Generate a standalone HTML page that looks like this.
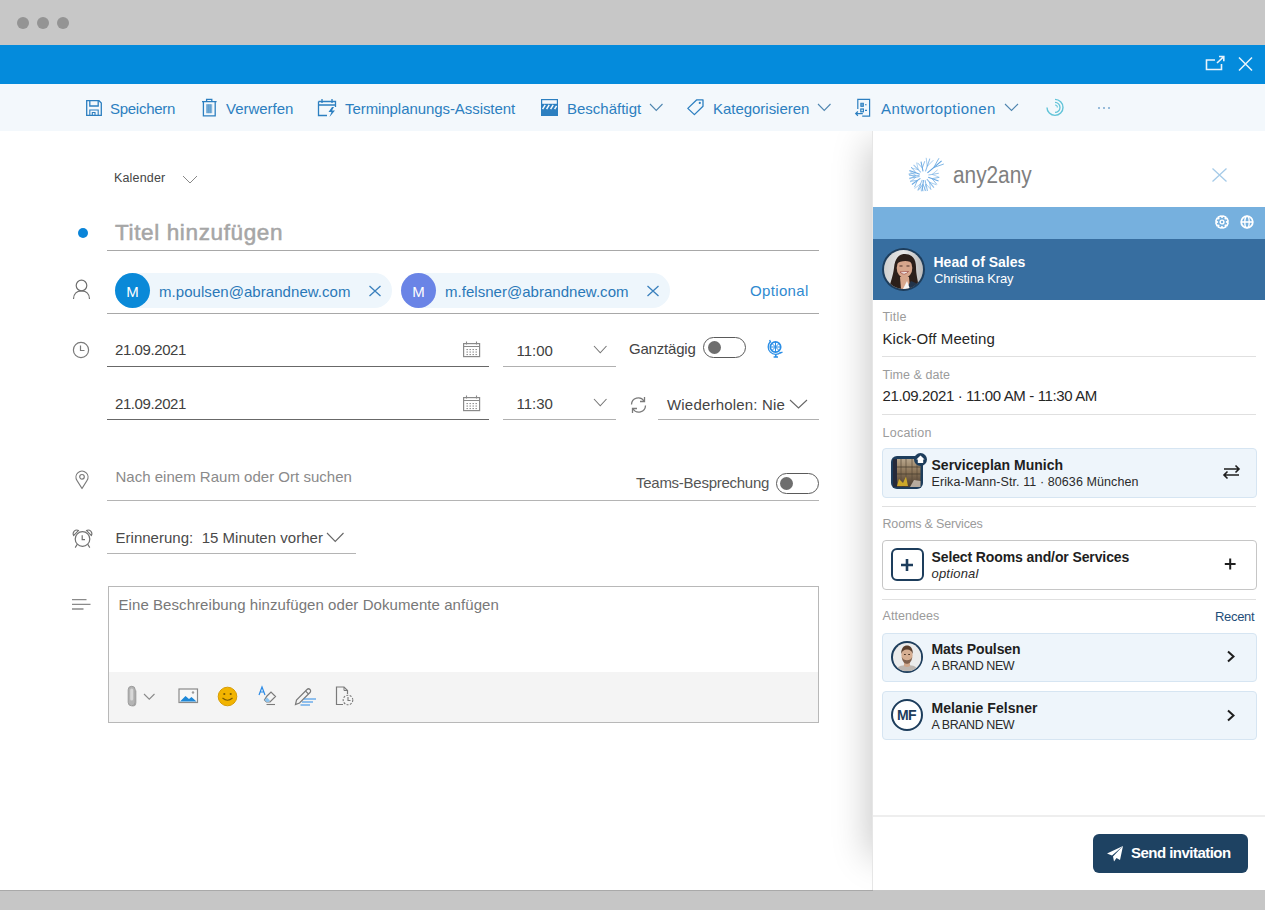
<!DOCTYPE html>
<html><head><meta charset="utf-8"><style>
html,body{margin:0;padding:0;width:1265px;height:910px;overflow:hidden;background:#fff;}
body{position:relative;font-family:"Liberation Sans",sans-serif;}
.a{position:absolute;}
.t{position:absolute;white-space:nowrap;}
svg.a{overflow:visible;}
</style></head><body>
<div class="a" style="left:0px;top:0px;width:1265px;height:45px;background:#c7c7c7;"></div>
<div class="a" style="left:16.5px;top:16.5px;width:12px;height:12px;background:#949494;border-radius:50%;"></div>
<div class="a" style="left:36.5px;top:16.5px;width:12px;height:12px;background:#949494;border-radius:50%;"></div>
<div class="a" style="left:56.5px;top:16.5px;width:12px;height:12px;background:#949494;border-radius:50%;"></div>
<div class="a" style="left:0px;top:45px;width:1265px;height:39px;background:#048bdc;"></div>
<svg class="a" style="left:1204px;top:55px;" width="22" height="17" viewBox="0 0 22 17" ><path d="M11 5 H2.5 V14.5 H17.5 V9" fill="none" stroke="#e8f3fb" stroke-width="1.6"/><path d="M13 8 L19.5 1.8 M15 1.5 H19.8 V6.3" fill="none" stroke="#e8f3fb" stroke-width="1.6"/></svg>
<svg class="a" style="left:1237px;top:56px;" width="17" height="16" viewBox="0 0 17 16" ><path d="M2 1.5 L15 14.5 M15 1.5 L2 14.5" fill="none" stroke="#eaf4fb" stroke-width="1.5"/></svg>
<div class="a" style="left:0px;top:84px;width:1265px;height:47px;background:#f3f8fc;"></div>
<svg class="a" style="left:85.5px;top:99.5px;" width="16" height="16" viewBox="0 0 16 16" ><path d="M0.7 0.7 H13 L15.3 3 V15.3 H0.7 Z" fill="none" stroke="#2c7fc0" stroke-width="1.3"/><path d="M3.8 0.7 V6 H12.2 V0.7" fill="none" stroke="#2c7fc0" stroke-width="1.3"/><path d="M3.8 15.3 V10 H12.2 V15.3 M6.3 15.3 V12.5 H9 V15.3" fill="none" stroke="#2c7fc0" stroke-width="1.1"/></svg>
<div id="t0" class="t" style="left:110.0px;top:101.00px;font-size:15px;line-height:15px;color:#2c7fc0;font-weight:400;font-style:normal;letter-spacing:-0.275px;">Speichern</div>
<svg class="a" style="left:201px;top:98px;" width="17" height="19" viewBox="0 0 17 19" ><path d="M1 3.6 H15.6 M5.6 3.4 V1.4 H10.8 V3.4 M2.4 3.6 V17.8 H14.2 V3.6" fill="none" stroke="#2c7fc0" stroke-width="1.3"/><rect x="5" y="6.2" width="6.2" height="9" fill="#2c7fc0" fill-opacity="0.55"/><path d="M7.1 6.2 V15.2 M9.1 6.2 V15.2" stroke="#2c7fc0" stroke-width="0.8" stroke-opacity="0.8"/></svg>
<div id="t1" class="t" style="left:226.0px;top:101.00px;font-size:15px;line-height:15px;color:#2c7fc0;font-weight:400;font-style:normal;letter-spacing:-0.024px;">Verwerfen</div>
<svg class="a" style="left:317px;top:98px;" width="21" height="20" viewBox="0 0 21 20" ><path d="M1.5 3.5 H18.5 V9 M1.5 3.5 V17.5 H10 M1.5 7 H18.5" fill="none" stroke="#2c7fc0" stroke-width="1.3"/><path d="M5 1 V5 M15 1 V5" stroke="#2c7fc0" stroke-width="1.3"/><path d="M15 9 L11.5 14 H14.5 L12.5 19 L18 12.5 H15 L17 9 Z" fill="#2c7fc0"/></svg>
<div id="t2" class="t" style="left:345.0px;top:101.00px;font-size:15px;line-height:15px;color:#2c7fc0;font-weight:400;font-style:normal;letter-spacing:-0.069px;">Terminplanungs-Assistent</div>
<svg class="a" style="left:541px;top:99px;" width="17" height="17" viewBox="0 0 17 17" ><rect x="0.6" y="0.6" width="15.8" height="15.8" fill="none" stroke="#2c7fc0" stroke-width="1.2"/><rect x="0.6" y="4.8" width="15.8" height="11.8" fill="#2c7fc0"/><path d="M1.6 10.2 L4.2 5.8 M5.6 10.2 L8.2 5.8 M9.6 10.2 L12.2 5.8 M13.6 10.2 L15.6 6.8" stroke="#f3f8fc" stroke-width="1.5"/></svg>
<div id="t3" class="t" style="left:567.0px;top:101.00px;font-size:15px;line-height:15px;color:#2c7fc0;font-weight:400;font-style:normal;letter-spacing:-0.004px;">Beschäftigt</div>
<svg class="a" style="left:649px;top:103px;" width="14.5" height="8.5" viewBox="0 0 14.5 8.5" ><path d="M1 1 L7.25 7.5 L13.5 1" fill="none" stroke="#4f86b0" stroke-width="1.1"/></svg>
<svg class="a" style="left:686px;top:98px;" width="19" height="19" viewBox="0 0 19 19" ><path d="M10.8 1.8 H17 V8.2 L8.4 16.6 L1.8 10.4 Z" fill="none" stroke="#2c7fc0" stroke-width="1.3" stroke-linejoin="round"/><circle cx="13.8" cy="4.9" r="1.1" fill="#2c7fc0"/></svg>
<div id="t4" class="t" style="left:713.0px;top:101.00px;font-size:15px;line-height:15px;color:#2c7fc0;font-weight:400;font-style:normal;letter-spacing:-0.029px;">Kategorisieren</div>
<svg class="a" style="left:817px;top:103px;" width="14.5" height="8.5" viewBox="0 0 14.5 8.5" ><path d="M1 1 L7.25 7.5 L13.5 1" fill="none" stroke="#4f86b0" stroke-width="1.1"/></svg>
<svg class="a" style="left:854px;top:98px;" width="17" height="20" viewBox="0 0 17 20" ><path d="M3.8 11 V1.3 H15.6 V18.2 H8.2" fill="none" stroke="#2c7fc0" stroke-width="1.2"/><rect x="6.8" y="5.2" width="2.6" height="3.2" fill="#2c7fc0" fill-opacity="0.7" stroke="#2c7fc0" stroke-width="0.9"/><path d="M11 6.8 H12.6" stroke="#2c7fc0" stroke-width="1.1"/><rect x="6.8" y="11" width="2.6" height="2.8" fill="none" stroke="#2c7fc0" stroke-width="1.2"/><path d="M11 12.4 H13" stroke="#2c7fc0" stroke-width="1.1"/><path d="M8.8 15.6 H1.8 M3.9 13.5 L1.7 15.6 L3.9 17.7" fill="none" stroke="#2c7fc0" stroke-width="1.2"/></svg>
<div id="t5" class="t" style="left:881.0px;top:101.00px;font-size:15px;line-height:15px;color:#2c7fc0;font-weight:400;font-style:normal;letter-spacing:0.424px;">Antwortoptionen</div>
<svg class="a" style="left:1003.5px;top:103px;" width="15" height="8.5" viewBox="0 0 15 8.5" ><path d="M1 1 L7.5 7.5 L14 1" fill="none" stroke="#4f86b0" stroke-width="1.1"/></svg>
<svg class="a" style="left:1044px;top:97px;" width="22" height="21" viewBox="0 0 22 21" ><path d="M11 2.4 A8 8 0 1 1 3 10.4" fill="none" stroke="#62c4d8" stroke-width="1.4"/><path d="M11 5.4 A5 5 0 0 1 11 15.4" fill="none" stroke="#62c4d8" stroke-width="1.3"/><path d="M11 8 A2.4 2.4 0 0 1 13.4 10.4" fill="none" stroke="#70cade" stroke-width="1.2"/></svg>
<div class="a" style="left:1098px;top:106.6px;width:2px;height:2px;background:#7aa8d0;border-radius:50%;"></div>
<div class="a" style="left:1103px;top:106.6px;width:2px;height:2px;background:#7aa8d0;border-radius:50%;"></div>
<div class="a" style="left:1108px;top:106.6px;width:2px;height:2px;background:#7aa8d0;border-radius:50%;"></div>
<div class="a" style="left:0px;top:131px;width:873px;height:759px;background:#ffffff;"></div>
<div id="t6" class="t" style="left:114.0px;top:172.00px;font-size:12.5px;line-height:12.5px;color:#454545;font-weight:400;font-style:normal;letter-spacing:0.161px;">Kalender</div>
<svg class="a" style="left:182px;top:175px;" width="16" height="9" viewBox="0 0 16 9" ><path d="M1 1 L8.0 8 L15 1" fill="none" stroke="#888888" stroke-width="1.0"/></svg>
<div class="a" style="left:78px;top:227.5px;width:10px;height:10px;background:#0a84d8;border-radius:50%;"></div>
<div id="t7" class="t" style="left:115.0px;top:222.00px;font-size:22.5px;line-height:22.5px;color:#a6a6a6;font-weight:400;font-style:normal;letter-spacing:0.633px;-webkit-text-stroke:0.55px #a6a6a6;">Titel hinzufügen</div>
<div class="a" style="left:107px;top:250px;width:712px;height:1px;background:#a8a8a8;"></div>
<svg class="a" style="left:72px;top:279px;" width="19" height="21" viewBox="0 0 19 21" ><circle cx="9.5" cy="6.5" r="5.3" fill="none" stroke="#6f6f6f" stroke-width="1.2"/><path d="M1.5 20 C1.5 14.5 5 11.8 9.5 11.8 C14 11.8 17.5 14.5 17.5 20" fill="none" stroke="#6f6f6f" stroke-width="1.2"/></svg>
<div class="a" style="left:115px;top:272.5px;width:277px;height:35px;background:#eef6fc;border-radius:17.5px;"></div>
<div class="a" style="left:115px;top:272.5px;width:35px;height:35px;background:#0a89d8;border-radius:50%;"></div>
<div id="t8" class="t" style="left:124.5px;top:284.00px;font-size:15px;line-height:15px;color:#ffffff;font-weight:400;font-style:normal;width:16px;text-align:center;">M</div>
<div id="t9" class="t" style="left:159.0px;top:284.00px;font-size:15px;line-height:15px;color:#2a78b8;font-weight:400;font-style:normal;letter-spacing:0.053px;">m.poulsen@abrandnew.com</div>
<svg class="a" style="left:368px;top:285px;" width="14" height="12" viewBox="0 0 14 12" ><path d="M1.5 1 L12.5 11 M12.5 1 L1.5 11" stroke="#3a80bd" stroke-width="1.3"/></svg>
<div class="a" style="left:401px;top:272.5px;width:269px;height:35px;background:#eef6fc;border-radius:17.5px;"></div>
<div class="a" style="left:401px;top:272.5px;width:35px;height:35px;background:#6a84e6;border-radius:50%;"></div>
<div id="t10" class="t" style="left:410.5px;top:284.00px;font-size:15px;line-height:15px;color:#ffffff;font-weight:400;font-style:normal;width:16px;text-align:center;">M</div>
<div id="t11" class="t" style="left:445.0px;top:284.00px;font-size:15px;line-height:15px;color:#2a78b8;font-weight:400;font-style:normal;letter-spacing:0.031px;">m.felsner@abrandnew.com</div>
<svg class="a" style="left:645.5px;top:285px;" width="14" height="12" viewBox="0 0 14 12" ><path d="M1.5 1 L12.5 11 M12.5 1 L1.5 11" stroke="#3a80bd" stroke-width="1.3"/></svg>
<div id="t12" class="t" style="left:750.0px;top:283.00px;font-size:15px;line-height:15px;color:#2f8ad0;font-weight:400;font-style:normal;letter-spacing:0.352px;">Optional</div>
<div class="a" style="left:107px;top:313px;width:712px;height:1px;background:#a8a8a8;"></div>
<svg class="a" style="left:72px;top:341px;" width="18" height="18" viewBox="0 0 18 18" ><circle cx="9" cy="9" r="7.6" fill="none" stroke="#7a7a7a" stroke-width="1.2"/><path d="M8.5 4.5 V9.5 H12.5" fill="none" stroke="#7a7a7a" stroke-width="1.2"/></svg>
<div id="t13" class="t" style="left:115.0px;top:342.00px;font-size:15px;line-height:15px;color:#404040;font-weight:400;font-style:normal;letter-spacing:-0.415px;">21.09.2021</div>
<div class="a" style="left:107px;top:366px;width:382px;height:1px;background:#686868;"></div>
<svg class="a" style="left:462.5px;top:341px;" width="18" height="17" viewBox="0 0 18 17" ><rect x="0.6" y="2.6" width="16" height="13" fill="none" stroke="#8a8a8a" stroke-width="1.2"/><path d="M0.6 5.5 H16.6 M3.5 0.5 V3.5 M13.5 0.5 V3.5" stroke="#8a8a8a" stroke-width="1.1"/><rect x="3.5" y="8" width="1.4" height="1.1" fill="#8a8a8a"/><rect x="6.5" y="8" width="1.4" height="1.1" fill="#8a8a8a"/><rect x="9.5" y="8" width="1.4" height="1.1" fill="#8a8a8a"/><rect x="12.5" y="8" width="1.4" height="1.1" fill="#8a8a8a"/><rect x="3.5" y="10.5" width="1.4" height="1.1" fill="#8a8a8a"/><rect x="6.5" y="10.5" width="1.4" height="1.1" fill="#8a8a8a"/><rect x="9.5" y="10.5" width="1.4" height="1.1" fill="#8a8a8a"/><rect x="12.5" y="10.5" width="1.4" height="1.1" fill="#8a8a8a"/><rect x="3.5" y="13" width="1.4" height="1.1" fill="#8a8a8a"/><rect x="6.5" y="13" width="1.4" height="1.1" fill="#8a8a8a"/><rect x="9.5" y="13" width="1.4" height="1.1" fill="#8a8a8a"/><rect x="12.5" y="13" width="1.4" height="1.1" fill="#8a8a8a"/></svg>
<div id="t14" class="t" style="left:516.5px;top:343.00px;font-size:15px;line-height:15px;color:#404040;font-weight:400;font-style:normal;letter-spacing:-0.020px;">11:00</div>
<svg class="a" style="left:593px;top:345.3px;" width="14.5" height="8.8" viewBox="0 0 14.5 8.8" ><path d="M1 1 L7.25 7.8 L13.5 1" fill="none" stroke="#777777" stroke-width="1.1"/></svg>
<div class="a" style="left:503px;top:366px;width:113px;height:1px;background:#b0b0b0;"></div>
<div id="t15" class="t" style="left:115.0px;top:396.00px;font-size:15px;line-height:15px;color:#404040;font-weight:400;font-style:normal;letter-spacing:-0.415px;">21.09.2021</div>
<div class="a" style="left:107px;top:419px;width:382px;height:1px;background:#686868;"></div>
<svg class="a" style="left:462.5px;top:394.5px;" width="18" height="17" viewBox="0 0 18 17" ><rect x="0.6" y="2.6" width="16" height="13" fill="none" stroke="#8a8a8a" stroke-width="1.2"/><path d="M0.6 5.5 H16.6 M3.5 0.5 V3.5 M13.5 0.5 V3.5" stroke="#8a8a8a" stroke-width="1.1"/><rect x="3.5" y="8" width="1.4" height="1.1" fill="#8a8a8a"/><rect x="6.5" y="8" width="1.4" height="1.1" fill="#8a8a8a"/><rect x="9.5" y="8" width="1.4" height="1.1" fill="#8a8a8a"/><rect x="12.5" y="8" width="1.4" height="1.1" fill="#8a8a8a"/><rect x="3.5" y="10.5" width="1.4" height="1.1" fill="#8a8a8a"/><rect x="6.5" y="10.5" width="1.4" height="1.1" fill="#8a8a8a"/><rect x="9.5" y="10.5" width="1.4" height="1.1" fill="#8a8a8a"/><rect x="12.5" y="10.5" width="1.4" height="1.1" fill="#8a8a8a"/><rect x="3.5" y="13" width="1.4" height="1.1" fill="#8a8a8a"/><rect x="6.5" y="13" width="1.4" height="1.1" fill="#8a8a8a"/><rect x="9.5" y="13" width="1.4" height="1.1" fill="#8a8a8a"/><rect x="12.5" y="13" width="1.4" height="1.1" fill="#8a8a8a"/></svg>
<div id="t16" class="t" style="left:516.5px;top:396.00px;font-size:15px;line-height:15px;color:#404040;font-weight:400;font-style:normal;letter-spacing:-0.020px;">11:30</div>
<svg class="a" style="left:593px;top:398.3px;" width="14.5" height="8.8" viewBox="0 0 14.5 8.8" ><path d="M1 1 L7.25 7.8 L13.5 1" fill="none" stroke="#777777" stroke-width="1.1"/></svg>
<div class="a" style="left:503px;top:419px;width:113px;height:1px;background:#b0b0b0;"></div>
<div id="t17" class="t" style="left:629.0px;top:341.00px;font-size:15px;line-height:15px;color:#444444;font-weight:400;font-style:normal;letter-spacing:-0.205px;">Ganztägig</div>
<div class="a" style="left:703px;top:337px;width:43px;height:21px;background:#ffffff;box-sizing:border-box;border:1.5px solid #5a5a5a;border-radius:11px;"></div><div class="a" style="left:707.5px;top:341px;width:13px;height:13px;background:#6e6e6e;border-radius:50%;"></div>
<svg class="a" style="left:766px;top:338px;" width="18" height="21" viewBox="0 0 18 21" ><circle cx="9.5" cy="9" r="5.2" fill="none" stroke="#2a8ee6" stroke-width="1.7"/><path d="M6 5.5 L13 12.5 M13 5.5 L6 12.5 M9.5 4 V14 M4.5 9 H14.5" stroke="#2a8ee6" stroke-width="1"/><path d="M4.2 3.7 A7.5 7.5 0 0 0 14.8 14.3" fill="none" stroke="#2a8ee6" stroke-width="1.3"/><path d="M3.6 2 L4.8 4.6 M16.5 14.2 L13.9 15.2" stroke="#2a8ee6" stroke-width="1.3"/><path d="M9.8 16.5 V18.6 M7.6 19 H12" stroke="#2a8ee6" stroke-width="1.5"/></svg>
<svg class="a" style="left:628.5px;top:395.5px;" width="19" height="18" viewBox="0 0 19 18" ><path d="M2.5 8.5 A6.8 6.8 0 0 1 15 5 M16.5 9.5 A6.8 6.8 0 0 1 4 13" fill="none" stroke="#7a7a7a" stroke-width="1.3"/><path d="M15.5 1 V5.5 H11 M3.5 17 V12.5 H8" fill="none" stroke="#7a7a7a" stroke-width="1.3"/></svg>
<div id="t18" class="t" style="left:667.0px;top:397.00px;font-size:15px;line-height:15px;color:#444444;font-weight:400;font-style:normal;letter-spacing:0.186px;">Wiederholen: Nie</div>
<svg class="a" style="left:789px;top:399px;" width="19" height="10" viewBox="0 0 19 10" ><path d="M1 1 L9.5 9 L18 1" fill="none" stroke="#666666" stroke-width="1.1"/></svg>
<div class="a" style="left:658px;top:419px;width:161px;height:1px;background:#b0b0b0;"></div>
<svg class="a" style="left:74px;top:470px;" width="16" height="20" viewBox="0 0 16 20" ><path d="M8 18.5 L3 10.5 A6 6 0 1 1 13 10.5 Z" fill="none" stroke="#7a7a7a" stroke-width="1.2" stroke-linejoin="round"/><circle cx="8" cy="6.8" r="2.3" fill="none" stroke="#7a7a7a" stroke-width="1.2"/></svg>
<div id="t19" class="t" style="left:115.5px;top:469.00px;font-size:15px;line-height:15px;color:#8a8a8a;font-weight:400;font-style:normal;letter-spacing:0.013px;">Nach einem Raum oder Ort suchen</div>
<div id="t20" class="t" style="left:636.0px;top:475.00px;font-size:15px;line-height:15px;color:#555555;font-weight:400;font-style:normal;letter-spacing:-0.264px;">Teams-Besprechung</div>
<div class="a" style="left:775.5px;top:472.5px;width:43px;height:21px;background:#ffffff;box-sizing:border-box;border:1.5px solid #5a5a5a;border-radius:11px;"></div><div class="a" style="left:780.0px;top:476.5px;width:13px;height:13px;background:#6e6e6e;border-radius:50%;"></div>
<div class="a" style="left:107px;top:499.5px;width:712px;height:1px;background:#b4b4b4;"></div>
<svg class="a" style="left:71.5px;top:528.5px;" width="21" height="20" viewBox="0 0 21 20" ><circle cx="10.5" cy="10" r="7.3" fill="none" stroke="#707070" stroke-width="1.2"/><path d="M10.2 6.3 V10.6 H13" fill="none" stroke="#707070" stroke-width="1.2"/><path d="M1.6 6.6 A3.8 3.8 0 0 1 6.6 1.4 Z M19.4 6.6 A3.8 3.8 0 0 0 14.4 1.4 Z" fill="none" stroke="#707070" stroke-width="1.1" stroke-linejoin="round"/><path d="M5.2 15.4 L3.2 18.6 M15.8 15.4 L17.8 18.6" fill="none" stroke="#707070" stroke-width="1.1"/></svg>
<div id="t21" class="t" style="left:115.5px;top:530.00px;font-size:15px;line-height:15px;color:#4a4a4a;font-weight:400;font-style:normal;letter-spacing:0.021px;">Erinnerung:&nbsp; 15 Minuten vorher</div>
<svg class="a" style="left:326px;top:532px;" width="18.5" height="10.5" viewBox="0 0 18.5 10.5" ><path d="M1 1 L9.25 9.5 L17.5 1" fill="none" stroke="#666666" stroke-width="1.1"/></svg>
<div class="a" style="left:107px;top:552.5px;width:249px;height:1px;background:#b4b4b4;"></div>
<svg class="a" style="left:71px;top:598px;" width="20" height="13" viewBox="0 0 20 13" ><path d="M1 1.6 H15.5 M1 6.4 H19.5 M1 11 H12.5" stroke="#8a8a8a" stroke-width="1.3"/></svg>
<div class="a" style="left:108px;top:585.5px;width:711px;height:137px;background:#ffffff;box-sizing:border-box;border:1px solid #b8b8b8;"></div>
<div class="a" style="left:109px;top:672px;width:709px;height:49.5px;background:#f4f4f4;"></div>
<div id="t22" class="t" style="left:118.5px;top:597.00px;font-size:15px;line-height:15px;color:#787878;font-weight:400;font-style:normal;letter-spacing:0.068px;">Eine Beschreibung hinzufügen oder Dokumente anfügen</div>
<svg class="a" style="left:127px;top:685px;" width="12" height="23" viewBox="0 0 12 23" ><rect x="1.2" y="1.3" width="7" height="19.5" rx="3.5" fill="#b4b4b4" stroke="#9a9a9a" stroke-width="1"/><rect x="3.2" y="3.5" width="3" height="12" rx="1.5" fill="#d8d8d8"/><path d="M8.8 5.5 V17.5 A3.5 3.5 0 0 1 5.3 21" fill="none" stroke="#a0a0a0" stroke-width="1.1"/></svg>
<svg class="a" style="left:142.5px;top:692.8px;" width="12.5" height="7.2" viewBox="0 0 12.5 7.2" ><path d="M1 1 L6.25 6.2 L11.5 1" fill="none" stroke="#8a8a8a" stroke-width="1.1"/></svg>
<svg class="a" style="left:178px;top:687.5px;" width="21" height="16" viewBox="0 0 21 16" ><rect x="1" y="1" width="18.5" height="13.5" fill="#f7f7f7" stroke="#8a8a8a" stroke-width="1.2"/><path d="M2 13.5 L7.5 8 L11 11 L13.5 9 L18.5 13.5 Z" fill="#1e88d8"/><circle cx="15" cy="4.5" r="1.2" fill="#9a9a9a"/></svg>
<svg class="a" style="left:217px;top:685.5px;" width="21" height="21" viewBox="0 0 21 21" ><circle cx="10.5" cy="10.5" r="9.3" fill="#f2b400" stroke="#d89c00" stroke-width="1"/><circle cx="7.3" cy="8" r="1.1" fill="#7a5a00"/><circle cx="13.7" cy="8" r="1.1" fill="#7a5a00"/><path d="M5.5 12 Q10.5 16.5 15.5 12" fill="none" stroke="#7a5a00" stroke-width="1.1"/></svg>
<svg class="a" style="left:257.5px;top:685.5px;" width="19" height="20" viewBox="0 0 19 20" ><path d="M1 9 L4 1 L7 9 M2.2 6 H5.8" fill="none" stroke="#2a8ae6" stroke-width="1.2"/><path d="M9 10 L13 6 L17.5 10.5 L12 16 H8.5 L6.5 14 Z" fill="none" stroke="#7a7a7a" stroke-width="1.2"/><path d="M6.5 14 L9 11.5 L12 14.5 L10.5 16 H8.5 Z" fill="#8cc4ef"/><path d="M8.5 18.5 H17" stroke="#7a7a7a" stroke-width="1.1"/></svg>
<svg class="a" style="left:294px;top:686.5px;" width="23" height="19" viewBox="0 0 23 19" ><path d="M1.5 17.5 L2.5 13 L13 2.5 A1.7 1.7 0 0 1 16 5.5 L5.5 16 Z" fill="none" stroke="#7a7a7a" stroke-width="1.2"/><path d="M11.5 4 L14.5 7" stroke="#7a7a7a" stroke-width="1.1"/><path d="M10 12 H22 M8 15 H19 M6.5 18 H16" stroke="#2a8ae6" stroke-width="1"/></svg>
<svg class="a" style="left:334.5px;top:686px;" width="20" height="20" viewBox="0 0 20 20" ><path d="M8 18.5 H1.5 V1 H9 L12.5 4.5 V8" fill="none" stroke="#7a7a7a" stroke-width="1.2"/><path d="M9 1 V4.5 H12.5" fill="none" stroke="#7a7a7a" stroke-width="1"/><circle cx="13" cy="14" r="4.8" fill="none" stroke="#7a7a7a" stroke-width="1.1" stroke-dasharray="2 1.4"/><path d="M13 11 V14.5 H15.5" fill="none" stroke="#7a7a7a" stroke-width="1.1"/></svg>
<div class="a" style="left:812px;top:131px;width:60px;height:759px;overflow:hidden;"><div class="a" style="left:60px;top:16px;width:60px;height:706px;box-shadow:0 0 36px 4px rgba(0,0,0,0.22);"></div></div>
<div class="a" style="left:872px;top:131px;width:393px;height:759px;background:#ffffff;"></div>
<div class="a" style="left:872px;top:131px;width:1px;height:759px;background:#e6e6e6;"></div>
<svg class="a" style="left:903px;top:153px;" width="46" height="44" viewBox="0 0 46 44" ><path d="M24.45 19.81 L38.62 7.92" stroke="#5a9fdf" stroke-opacity="1.0" stroke-width="1.05"/><path d="M30.69 14.57 L35.96 5.23" stroke="#6aaae2" stroke-opacity="1.0" stroke-width="0.85"/><path d="M30.69 14.57 L40.80 11.00" stroke="#6aaae2" stroke-opacity="1.0" stroke-width="0.85"/><path d="M22.47 18.45 L26.86 5.68" stroke="#5a9fdf" stroke-opacity="0.7" stroke-width="1.05"/><path d="M24.22 13.34 L23.18 4.83" stroke="#6aaae2" stroke-opacity="0.7" stroke-width="0.85"/><path d="M24.22 13.34 L30.28 7.28" stroke="#6aaae2" stroke-opacity="0.7" stroke-width="0.85"/><path d="M20.06 18.30 L17.99 8.52" stroke="#5a9fdf" stroke-opacity="0.9" stroke-width="1.05"/><path d="M19.34 14.90 L14.43 9.77" stroke="#6aaae2" stroke-opacity="0.9" stroke-width="0.85"/><path d="M19.34 14.90 L21.74 8.22" stroke="#6aaae2" stroke-opacity="0.9" stroke-width="0.85"/><path d="M17.87 19.46 L10.58 11.91" stroke="#5a9fdf" stroke-opacity="0.6" stroke-width="1.05"/><path d="M15.27 16.77 L8.22 14.85" stroke="#6aaae2" stroke-opacity="0.6" stroke-width="0.85"/><path d="M15.27 16.77 L13.60 9.65" stroke="#6aaae2" stroke-opacity="0.6" stroke-width="0.85"/><path d="M16.77 21.16 L6.43 17.40" stroke="#5a9fdf" stroke-opacity="0.9" stroke-width="1.05"/><path d="M12.99 19.78 L5.59 21.07" stroke="#6aaae2" stroke-opacity="0.9" stroke-width="0.85"/><path d="M12.99 19.78 L8.15 14.04" stroke="#6aaae2" stroke-opacity="0.9" stroke-width="0.85"/><path d="M16.50 22.54 L6.01 22.18" stroke="#5a9fdf" stroke-opacity="0.6" stroke-width="1.05"/><path d="M12.76 22.41 L6.35 25.93" stroke="#6aaae2" stroke-opacity="0.6" stroke-width="0.85"/><path d="M12.76 22.41 L6.61 18.46" stroke="#6aaae2" stroke-opacity="0.6" stroke-width="0.85"/><path d="M16.57 23.48 L6.23 25.30" stroke="#5a9fdf" stroke-opacity="0.7" stroke-width="1.05"/><path d="M12.88 24.13 L7.34 28.91" stroke="#6aaae2" stroke-opacity="0.7" stroke-width="0.85"/><path d="M12.88 24.13 L6.04 21.54" stroke="#6aaae2" stroke-opacity="0.7" stroke-width="0.85"/><path d="M17.36 25.35 L8.86 31.52" stroke="#5a9fdf" stroke-opacity="0.9" stroke-width="1.05"/><path d="M14.33 27.55 L11.45 34.26" stroke="#6aaae2" stroke-opacity="0.9" stroke-width="0.85"/><path d="M14.33 27.55 L7.05 28.21" stroke="#6aaae2" stroke-opacity="0.9" stroke-width="0.85"/><path d="M19.24 26.84 L14.75 37.43" stroke="#5a9fdf" stroke-opacity="0.6" stroke-width="1.05"/><path d="M17.56 30.80 L18.37 38.48" stroke="#6aaae2" stroke-opacity="0.6" stroke-width="0.85"/><path d="M17.56 30.80 L11.47 35.56" stroke="#6aaae2" stroke-opacity="0.6" stroke-width="0.85"/><path d="M20.45 27.17 L19.11 38.08" stroke="#5a9fdf" stroke-opacity="0.9" stroke-width="1.05"/><path d="M19.96 31.16 L22.88 38.09" stroke="#6aaae2" stroke-opacity="0.9" stroke-width="0.85"/><path d="M19.96 31.16 L15.45 37.17" stroke="#6aaae2" stroke-opacity="0.9" stroke-width="0.85"/><path d="M22.01 27.08 L24.49 37.80" stroke="#5a9fdf" stroke-opacity="0.7" stroke-width="1.05"/><path d="M22.92 31.01 L28.03 36.51" stroke="#6aaae2" stroke-opacity="0.7" stroke-width="0.85"/><path d="M22.92 31.01 L20.74 38.20" stroke="#6aaae2" stroke-opacity="0.7" stroke-width="0.85"/><path d="M23.89 26.15 L30.96 34.57" stroke="#5a9fdf" stroke-opacity="0.7" stroke-width="1.05"/><path d="M26.48 29.23 L33.54 31.82" stroke="#6aaae2" stroke-opacity="0.7" stroke-width="0.85"/><path d="M26.48 29.23 L27.80 36.63" stroke="#6aaae2" stroke-opacity="0.7" stroke-width="0.85"/><path d="M25.23 24.24 L35.57 28.00" stroke="#5a9fdf" stroke-opacity="0.9" stroke-width="1.05"/><path d="M29.01 25.62 L36.41 24.33" stroke="#6aaae2" stroke-opacity="0.9" stroke-width="0.85"/><path d="M29.01 25.62 L33.85 31.36" stroke="#6aaae2" stroke-opacity="0.9" stroke-width="0.85"/><path d="M25.44 22.00 L35.82 20.35" stroke="#5a9fdf" stroke-opacity="0.6" stroke-width="1.05"/><path d="M29.15 21.41 L34.76 16.73" stroke="#6aaae2" stroke-opacity="0.6" stroke-width="0.85"/><path d="M29.15 21.41 L35.93 24.12" stroke="#6aaae2" stroke-opacity="0.6" stroke-width="0.85"/></svg>
<div id="t23" class="t" style="left:952.5px;top:164.00px;font-size:23.5px;line-height:23.5px;color:#808080;font-weight:400;font-style:normal;transform:scaleX(0.8854);transform-origin:0 0;">any2any</div>
<svg class="a" style="left:1211px;top:167px;" width="17" height="16" viewBox="0 0 17 16" ><path d="M1.5 1.5 L15.5 14.5 M15.5 1.5 L1.5 14.5" stroke="#a6cbe8" stroke-width="1.3"/></svg>
<div class="a" style="left:873px;top:207px;width:392px;height:32px;background:#76b0de;"></div>
<svg class="a" style="left:1214.6px;top:215.1px;" width="14" height="14" viewBox="0 0 14 14" ><path d="M11.70 6.87 L13.13 7.94 L12.00 10.67 L10.23 10.41 L10.41 10.23 L10.67 12.00 L7.94 13.13 L6.87 11.70 L7.13 11.70 L6.06 13.13 L3.33 12.00 L3.59 10.23 L3.77 10.41 L2.00 10.67 L0.87 7.94 L2.30 6.87 L2.30 7.13 L0.87 6.06 L2.00 3.33 L3.77 3.59 L3.59 3.77 L3.33 2.00 L6.06 0.87 L7.13 2.30 L6.87 2.30 L7.94 0.87 L10.67 2.00 L10.41 3.77 L10.23 3.59 L12.00 3.33 L13.13 6.06 L11.70 7.13 Z" fill="none" stroke="#fff" stroke-width="1.6" stroke-linejoin="round"/><circle cx="7" cy="7" r="1.9" fill="none" stroke="#fff" stroke-width="1.4"/></svg>
<svg class="a" style="left:1240.3px;top:215.1px;" width="14" height="14" viewBox="0 0 14 14" ><circle cx="7" cy="7" r="5.8" fill="none" stroke="#fff" stroke-width="1.8"/><ellipse cx="7" cy="7" rx="2.2" ry="5.8" fill="none" stroke="#fff" stroke-width="1.4"/><path d="M1.2 7 H12.8" stroke="#fff" stroke-width="1.6"/></svg>
<div class="a" style="left:873px;top:239px;width:392px;height:61px;background:#376ea0;"></div>
<div class="a" style="left:882px;top:247.5px;width:43px;height:43px;background:#1d3d5c;border-radius:50%;"></div>
<svg class="a" style="left:884px;top:249.5px;" width="39" height="39" viewBox="0 0 39 39" ><defs><clipPath id="c1"><circle cx="19.5" cy="19.5" r="19.5"/></clipPath><linearGradient id="bg1" x1="0" y1="0" x2="1" y2="0"><stop offset="0" stop-color="#d0d0d0"/><stop offset="0.5" stop-color="#e6e6e6"/><stop offset="1" stop-color="#bcbcbc"/></linearGradient></defs><g clip-path="url(#c1)"><rect width="39" height="39" fill="url(#bg1)"/><path d="M5 39 C7 30 9 26 10 18 C11 8 15 4 21 4 C28 4 32 9 32 17 C32 25 34 30 35 39 Z" fill="#2b1f1a"/><ellipse cx="20.5" cy="18" rx="7.8" ry="10" fill="#d6a68c"/><path d="M12 14 C13 7 18 6 22 6 C26 6 29 9 29 14 C26 10 17 10 12 14 Z" fill="#2b1f1a"/><path d="M15.5 16 H18.5 M22.5 16 H25.5" stroke="#4a3028" stroke-width="1.2"/><path d="M16 22 Q20 26.5 24.5 21.5 Z" fill="#ffffff" stroke="#a0504a" stroke-width="0.8"/><path d="M16 27 L17 39 H26 L25 27 Z" fill="#d6a68c"/><path d="M22 39 L27 31 L34 34 L36 39 Z" fill="#22344a"/><path d="M19 39 L23 31 L26 39 Z" fill="#f4f4f4"/></g></svg>
<div id="t24" class="t" style="left:933.5px;top:255.00px;font-size:14px;line-height:14px;color:#ffffff;font-weight:700;font-style:normal;letter-spacing:-0.002px;">Head of Sales</div>
<div id="t25" class="t" style="left:934.0px;top:272.00px;font-size:13px;line-height:13px;color:#ffffff;font-weight:400;font-style:normal;letter-spacing:-0.164px;">Christina Kray</div>
<div id="t26" class="t" style="left:882.5px;top:311.00px;font-size:12.5px;line-height:12.5px;color:#9b9b9b;font-weight:400;font-style:normal;letter-spacing:0.200px;">Title</div>
<div id="t27" class="t" style="left:882.5px;top:331.00px;font-size:15px;line-height:15px;color:#262626;font-weight:400;font-style:normal;letter-spacing:0.116px;">Kick-Off Meeting</div>
<div class="a" style="left:882px;top:355.5px;width:374px;height:1px;background:#e0e0e0;"></div>
<div id="t28" class="t" style="left:882.5px;top:369.00px;font-size:12.5px;line-height:12.5px;color:#9b9b9b;font-weight:400;font-style:normal;letter-spacing:0.053px;">Time &amp; date</div>
<div id="t29" class="t" style="left:882.5px;top:388.00px;font-size:15px;line-height:15px;color:#262626;font-weight:400;font-style:normal;letter-spacing:-0.368px;">21.09.2021 · 11:00 AM - 11:30 AM</div>
<div class="a" style="left:882px;top:413.5px;width:374px;height:1px;background:#e0e0e0;"></div>
<div id="t30" class="t" style="left:882.5px;top:427.00px;font-size:12.5px;line-height:12.5px;color:#9b9b9b;font-weight:400;font-style:normal;letter-spacing:0.242px;">Location</div>
<div class="a" style="left:882px;top:447.5px;width:374.5px;height:50px;background:#eef5fb;box-sizing:border-box;border:1px solid #d6e5f2;border-radius:4px;"></div>
<div class="a" style="left:890.5px;top:456px;width:32.5px;height:33px;background:#1d3d5c;border-radius:6px;"></div>
<svg class="a" style="left:893px;top:458.5px;" width="27.5" height="28" viewBox="0 0 27.5 28" ><defs><linearGradient id="bd" x1="0" y1="0" x2="0" y2="1"><stop offset="0" stop-color="#b8a68c"/><stop offset="0.45" stop-color="#8a7458"/><stop offset="1" stop-color="#4a3c30"/></linearGradient></defs><rect width="27.5" height="28" rx="3" fill="url(#bd)"/><rect x="0" y="0" width="4" height="28" fill="#262a3a"/><path d="M8 0 V28 M13 0 V28 M19 0 V28 M24 0 V28" stroke="#5a4a3a" stroke-width="1" stroke-opacity="0.7"/><path d="M4 8 H27.5 M4 15 H27.5" stroke="#4a3e30" stroke-width="1.2" stroke-opacity="0.8"/><path d="M4 27 L6 20 L10 24 L13 17.5 L15 27 Z" fill="#e0b828" fill-opacity="0.85"/><path d="M17 28 L21 21 L27.5 22 V28 Z" fill="#cfc4b8" fill-opacity="0.8"/></svg>
<div class="a" style="left:913.5px;top:452.5px;width:13px;height:13px;background:#1d3d5c;border-radius:50%;"></div>
<svg class="a" style="left:915.5px;top:454.5px;" width="9" height="9" viewBox="0 0 9 9" ><path d="M4.5 0.6 L8.6 4.6 H7.2 V8 H1.8 V4.6 H0.4 Z" fill="#ffffff"/></svg>
<div id="t31" class="t" style="left:931.5px;top:458.00px;font-size:14px;line-height:14px;color:#1e1e1e;font-weight:700;font-style:normal;letter-spacing:0.004px;">Serviceplan Munich</div>
<div id="t32" class="t" style="left:931.5px;top:476.00px;font-size:12.5px;line-height:12.5px;color:#2a2a2a;font-weight:400;font-style:normal;letter-spacing:0.088px;">Erika-Mann-Str. 11 · 80636 München</div>
<svg class="a" style="left:1222px;top:464px;" width="19" height="16" viewBox="0 0 19 16" ><path d="M2 5 H17 M13.5 1.5 L17 5 L13.5 8.5 M17 11 H2 M5.5 7.5 L2 11 L5.5 14.5" fill="none" stroke="#1e1e1e" stroke-width="1.6"/></svg>
<div class="a" style="left:882px;top:506px;width:374px;height:1px;background:#e0e0e0;"></div>
<div id="t33" class="t" style="left:882.5px;top:518.00px;font-size:12.5px;line-height:12.5px;color:#9b9b9b;font-weight:400;font-style:normal;letter-spacing:-0.171px;">Rooms &amp; Services</div>
<div class="a" style="left:882px;top:540px;width:374.5px;height:49.5px;background:#ffffff;box-sizing:border-box;border:1px solid #c6c6c6;border-radius:4px;"></div>
<div class="a" style="left:890.5px;top:548px;width:33px;height:33px;background:transparent;box-sizing:border-box;border:2.5px solid #1d3d5c;border-radius:6px;"></div>
<svg class="a" style="left:899px;top:556.5px;" width="16" height="16" viewBox="0 0 16 16" ><path d="M8 2 V14 M2 8 H14" stroke="#1d3d5c" stroke-width="2.6"/></svg>
<div id="t34" class="t" style="left:931.5px;top:550.00px;font-size:14px;line-height:14px;color:#1e1e1e;font-weight:700;font-style:normal;letter-spacing:-0.110px;">Select Rooms and/or Services</div>
<div id="t35" class="t" style="left:931.5px;top:567.00px;font-size:13px;line-height:13px;color:#2a2a2a;font-weight:400;font-style:italic;letter-spacing:0.193px;">optional</div>
<svg class="a" style="left:1223px;top:556.5px;" width="15" height="14" viewBox="0 0 15 14" ><path d="M7.2 1.5 V12.5 M1.8 7 H12.6" stroke="#1e1e1e" stroke-width="2"/></svg>
<div class="a" style="left:882px;top:598.5px;width:374px;height:1px;background:#e0e0e0;"></div>
<div id="t36" class="t" style="left:882.5px;top:610.00px;font-size:12.5px;line-height:12.5px;color:#9b9b9b;font-weight:400;font-style:normal;letter-spacing:0.045px;">Attendees</div>
<div id="t37" class="t" style="left:1215.0px;top:610.00px;font-size:13px;line-height:13px;color:#1f4e79;font-weight:400;font-style:normal;letter-spacing:-0.316px;">Recent</div>
<div class="a" style="left:882px;top:632.5px;width:374.5px;height:49px;background:#eef5fb;box-sizing:border-box;border:1px solid #d6e5f2;border-radius:4px;"></div>
<div id="t38" class="t" style="left:931.5px;top:642.00px;font-size:14px;line-height:14px;color:#1e1e1e;font-weight:700;font-style:normal;letter-spacing:-0.108px;">Mats Poulsen</div>
<div id="t39" class="t" style="left:931.5px;top:660.00px;font-size:12.5px;line-height:12.5px;color:#2a2a2a;font-weight:400;font-style:normal;letter-spacing:-0.440px;">A BRAND NEW</div>
<svg class="a" style="left:1225px;top:650.2px;" width="12" height="13" viewBox="0 0 12 13" ><path d="M3 1.5 L8.5 6.5 L3 11.5" fill="none" stroke="#1e1e1e" stroke-width="2"/></svg>
<div class="a" style="left:882px;top:691px;width:374.5px;height:49px;background:#eef5fb;box-sizing:border-box;border:1px solid #d6e5f2;border-radius:4px;"></div>
<div id="t40" class="t" style="left:931.5px;top:701.00px;font-size:14px;line-height:14px;color:#1e1e1e;font-weight:700;font-style:normal;letter-spacing:0.072px;">Melanie Felsner</div>
<div id="t41" class="t" style="left:931.5px;top:719.00px;font-size:12.5px;line-height:12.5px;color:#2a2a2a;font-weight:400;font-style:normal;letter-spacing:-0.440px;">A BRAND NEW</div>
<svg class="a" style="left:1225px;top:708.9px;" width="12" height="13" viewBox="0 0 12 13" ><path d="M3 1.5 L8.5 6.5 L3 11.5" fill="none" stroke="#1e1e1e" stroke-width="2"/></svg>
<div class="a" style="left:890.5px;top:640.7px;width:32.5px;height:32.5px;background:#1d3d5c;border-radius:50%;"></div>
<svg class="a" style="left:892.6px;top:642.8px;" width="28.3" height="28.3" viewBox="0 0 28.3 28.3" ><defs><clipPath id="c2"><circle cx="14.15" cy="14.15" r="14.15"/></clipPath></defs><g clip-path="url(#c2)"><rect width="28.3" height="28.3" fill="#ebebeb"/><path d="M2 28.3 C3 24 8 22 14 22 C20 22 25 24 26 28.3 Z" fill="#bdb6b0"/><path d="M11 18 H17 V23 C15 24.5 13 24.5 11 23 Z" fill="#d0a88c"/><ellipse cx="14" cy="12.5" rx="5.6" ry="7.3" fill="#d6ae92"/><path d="M8.2 11 C8 5 11 2.5 14 2.5 C17 2.5 20.2 5 19.8 11 C19 8 17 6.5 14 6.5 C11 6.5 9 8 8.2 11 Z" fill="#5a3e2c"/><path d="M8.8 14 C9.5 19.5 12 20.8 14 20.8 C16 20.8 18.5 19.5 19.2 14 C18 16.5 16.5 17.2 14 17.2 C11.5 17.2 10 16.5 8.8 14 Z" fill="#6a4e3c" fill-opacity="0.8"/><path d="M11 11.5 H12.8 M15.2 11.5 H17" stroke="#4a3426" stroke-width="1"/></g></svg>
<div class="a" style="left:890.5px;top:699.4px;width:32px;height:32px;background:#ffffff;box-sizing:border-box;border:2px solid #1d3d5c;border-radius:50%;"></div>
<div id="t42" class="t" style="left:896.0px;top:708.00px;font-size:14px;line-height:14px;color:#1d3d5c;font-weight:700;font-style:normal;width:21px;text-align:center;letter-spacing:-0.5px;">MF</div>
<div class="a" style="left:873px;top:815px;width:392px;height:1.5px;background:#eeeeee;"></div>
<div class="a" style="left:1092.5px;top:834px;width:155.5px;height:39px;background:#1e4262;border-radius:6px;"></div>
<svg class="a" style="left:1105.5px;top:844.5px;" width="18" height="17" viewBox="0 0 18 17" ><path d="M17 1 L1 8.5 L6 10.5 Z M17 1 L7 11.5 L8 16.5 L10.5 13 L14 15 Z" fill="#ffffff"/></svg>
<div id="t43" class="t" style="left:1131.0px;top:845.00px;font-size:15px;line-height:15px;color:#ffffff;font-weight:700;font-style:normal;letter-spacing:-0.524px;">Send invitation</div>
<div class="a" style="left:0px;top:890px;width:1265px;height:20px;background:#c6c6c6;"></div>
<div class="a" style="left:0px;top:890px;width:873px;height:1px;background:#a9a9a9;"></div>
</body></html>
